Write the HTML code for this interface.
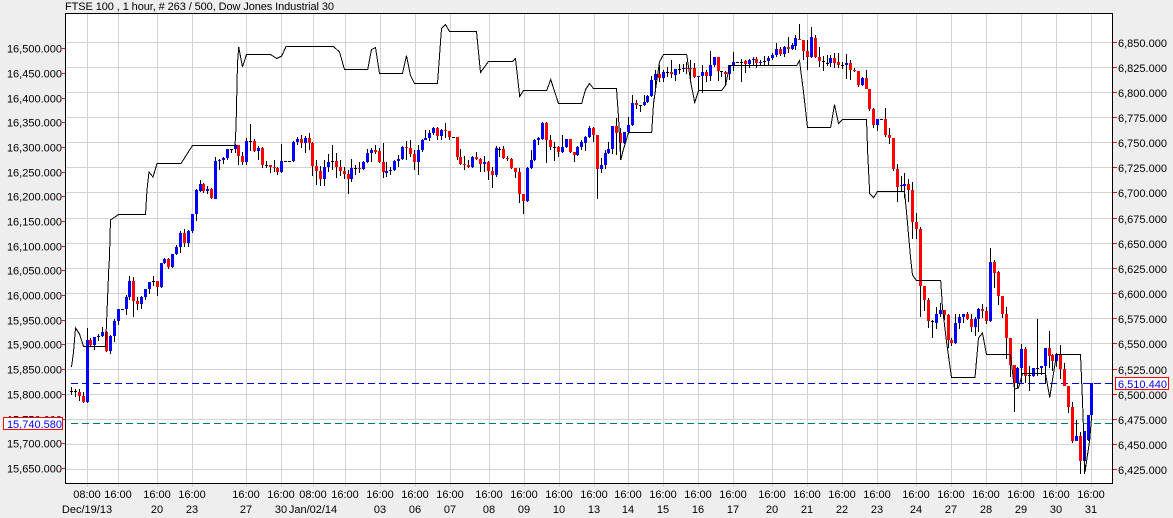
<!DOCTYPE html>
<html><head><meta charset="utf-8"><style>
html,body{margin:0;padding:0;background:#eeeeee}
svg{display:block}
text{font-family:"Liberation Sans",Arial,sans-serif;font-size:11px;fill:#000}
</style></head><body>
<svg xmlns="http://www.w3.org/2000/svg" width="1173" height="518" viewBox="0 0 1173 518">
<rect width="1173" height="518" fill="#eeeeee"/>
<rect x="65" y="13" width="1047" height="470" fill="#fff"/>
<g shape-rendering="crispEdges">
<path fill="none" stroke="#d3d3d3" d="M66 42.5H1112M66 67.5H1112M66 92.5H1112M66 117.5H1112M66 142.5H1112M66 167.5H1112M66 192.5H1112M66 218.5H1112M66 243.5H1112M66 268.5H1112M66 293.5H1112M66 318.5H1112M66 343.5H1112M66 369.5H1112M66 394.5H1112M66 419.5H1112M66 444.5H1112M66 469.5H1112"/>
<path fill="none" stroke="#d3d3d3" d="M87.5 14V487M118.5 14V487M157.5 14V487M192.5 14V487M246.5 14V487M281.5 14V487M313.5 14V487M345.5 14V487M380.5 14V487M415.5 14V487M450.5 14V487M489.5 14V487M524.5 14V487M559.5 14V487M594.5 14V487M628.5 14V487M663.5 14V487M698.5 14V487M733.5 14V487M772.5 14V487M807.5 14V487M842.5 14V487M877.5 14V487M916.5 14V487M951.5 14V487M986.5 14V487M1021.5 14V487M1056.5 14V487M1091.5 14V487"/>
<path fill="none" stroke="#0000e6" stroke-dasharray="7 4" d="M71 383.5H1112"/>
<path fill="none" stroke="#007a78" stroke-dasharray="7 4" d="M71 423.5H1112"/>
<g transform="translate(.5 0)" fill="none">
<path stroke="#000" d="M71 387V395M75 389V397M79 389V401M83 392V403M87 328V403M90 338V346M94 337V350M98 334V341M102 327V337M106 331V352M110 335V354M114 319V342M118 309V325M126 295V315M129 276V300M133 277V317M137 297V310M141 296V309M145 289V300M149 282V294M153 276V286M157 281V296M161 263V288M164 258V264M168 258V269M172 254V268M176 245V255M180 231V253M184 229V247M188 230V247M192 214V233M196 189V221M200 180V192M203 183V193M207 186V194M211 188V199M215 157V199M219 159V170M223 157V164M227 149V160M231 149V153M235 144V153M238 145V165M242 152V165M246 138V165M250 124V151M254 139V152M258 146V160M262 147V168M266 161V168M270 165V173M274 160V172M277 167V175M281 144V173M293 141V162M297 137V145M301 135V148M305 136V153M309 133V150M312 142V176M316 160V185M320 166V186M324 160V186M328 154V172M332 145V170M336 153V178M340 160V176M344 167V179M348 170V194M351 159V182M355 165V175M359 162V173M363 161V170M367 149V163M371 148V162M375 145V154M379 148V163M383 143V178M386 162V177M390 167V175M394 160V171M398 155V167M402 146V160M406 141V160M410 140V157M414 150V170M418 145V175M422 139V152M425 130V140M429 130V141M433 127V135M437 127V140M441 129V140M445 123V138M449 131V140M457 137V160M460 149V165M464 156V170M468 160V168M472 156V168M476 152V160M480 158V172M484 156V172M488 161V180M492 167V188M496 146V177M499 147V157M503 146V159M507 156V161M511 158V169M515 168V178M519 168V203M523 194V214M527 167V202M531 150V169M534 139V161M538 137V145M542 122V140M546 122V163M550 135V150M554 142V161M558 146V157M562 135V153M566 139V148M570 139V153M574 152V162M577 146V156M581 140V150M585 136V151M589 126V138M593 127V142M597 135V199M601 158V173M605 150V169M608 142V154M612 126V154M616 118V155M620 128V160M624 132V144M628 117V134M632 95V126M636 100V109M640 105V112M644 95V106M647 95V103M651 76V97M655 70V92M659 65V82M663 70V82M667 67V77M671 60V78M675 69V81M679 64V74M683 64V72M686 62V74M690 60V82M694 63V78M698 76V90M702 65V93M706 70V82M710 51V81M714 57V67M718 57V81M721 71V77M725 71V85M729 65V80M733 52V71M741 59V82M745 60V73M749 59V68M753 57V65M756 57V68M760 60V65M764 56V65M768 56V65M772 53V60M776 43V57M780 47V56M784 46V57M788 37V53M792 43V50M795 35V50M799 24V40M803 40V60M807 40V70M811 27V58M815 35V58M819 47V67M823 56V71M827 55V66M830 55V67M834 53V68M838 53V68M842 62V69M846 54V79M850 60V80M854 68V72M858 71V87M862 77V86M866 70V89M869 89V111M873 108V128M877 119V131M885 108V137M889 128V144M893 138V171M897 164V202M901 176V191M904 173V198M908 179V202M912 182V239M916 213V239M920 227V317M924 286V311M928 298V328M932 320V338M936 307V329M940 303V317M944 310V320M948 314V348M951 338V346M955 314V344M959 314V329M963 314V323M967 312V320M971 314V332M975 317V336M978 308V332M982 304V318M986 307V324M990 248V322M994 260V288M998 271V305M1002 296V318M1006 307V359M1010 338V377M1014 365V412M1017 367V388M1021 344V383M1025 347V383M1029 366V391M1033 368V377M1037 319V376M1041 366V375M1045 348V384M1049 331V368M1052 354V371M1056 353V367M1060 345V379M1064 363V386M1068 386V413M1072 402V443M1076 420V441M1080 432V474M1084 431V474M1088 415V441M1091 383V420"/>
<path stroke="#000" stroke-width="3" d="M71 391V392M75 391V392M122 309V310M153 281V282M231 149V150M250 141V142M266 165V166M285 161V162M289 161V162M332 161V162M355 168V169M453 137V138M499 149V150M554 147V148M640 105V106M667 72V73M679 69V70M721 71V72M737 62V63M741 62V63M764 61V62M823 61V62M827 63V64M842 65V66M881 119V120M932 321V322M1029 375V376M1037 368V369"/>
<path stroke="#0000ff" stroke-width="3" d="M87 340V402M94 337V345M98 336V337M102 332V336M110 336V351M114 321V336M118 309V321M126 297V309M129 281V297M141 297V304M145 289V297M149 282V289M161 263V287M164 259V263M172 254V267M176 247V254M180 233V247M188 231V243M192 214V231M196 190V214M200 184V191M207 189V191M215 161V199M219 160V161M223 158V160M227 149V158M235 145V149M246 141V162M258 148V151M281 161V172M293 142V161M297 139V142M305 138V143M324 167V179M328 162V167M351 168V179M363 162V169M367 153V162M371 150V153M386 171V173M390 170V171M394 161V170M398 159V161M402 147V159M418 150V162M422 140V150M425 138V140M429 133V138M433 128V133M441 130V136M472 157V167M484 162V164M496 148V175M527 168V201M531 160V168M534 140V160M538 138V140M542 123V139M562 147V152M566 139V147M577 147V155M581 142V147M585 137V143M589 128V137M601 165V169M605 153V165M608 149V153M612 126V149M624 132V143M628 125V132M632 103V125M644 102V105M647 96V102M651 80V96M655 74V80M663 72V78M675 69V75M683 68V69M698 76V77M702 72V76M710 65V76M714 57V65M729 65V74M733 62V65M749 60V64M753 59V60M760 62V63M768 58V61M772 55V58M776 49V55M784 47V54M792 45V49M795 38V46M811 37V57M830 58V63M846 63V65M862 78V85M877 119V125M901 185V186M904 184V186M936 314V323M940 310V314M955 323V343M959 317V323M963 314V317M975 319V327M978 309V319M990 262V321M1017 368V383M1021 349V368M1033 368V376M1041 366V368M1045 348V366M1056 354V361M1076 436V441M1084 431V461M1088 415V440M1091 383V415"/>
<path stroke="#ff0000" stroke-width="3" d="M79 392V396M83 396V402M90 340V345M106 332V351M133 281V301M137 301V304M157 281V287M168 259V267M184 233V243M203 184V191M211 189V198M238 145V156M242 156V162M254 141V151M262 148V165M270 165V167M274 167V168M277 168V172M301 139V143M309 138V143M312 143V166M316 166V171M320 171V179M336 161V167M340 167V171M344 171V174M348 174V179M359 168V169M375 150V152M379 151V162M383 162V172M406 147V148M410 148V154M414 154V162M437 128V136M445 130V131M449 131V137M457 137V157M460 157V164M464 164V165M468 165V167M476 157V159M480 159V164M488 162V171M492 171V175M503 149V158M507 158V159M511 159V168M515 168V172M519 172V194M523 194V201M546 123V140M550 140V147M558 147V152M570 139V152M574 152V155M593 128V135M597 135V169M616 126V133M620 133V143M636 103V105M659 74V78M671 72V74M686 68V69M690 68V69M694 68V77M706 72V76M718 57V71M725 72V74M745 61V64M756 59V63M780 49V54M788 47V49M799 39V40M803 40V51M807 51V57M815 38V57M819 57V61M834 58V63M838 62V65M850 63V70M854 70V71M858 71V85M866 78V89M869 89V109M873 109V125M885 119V135M889 135V138M893 138V169M897 169V187M908 184V190M912 190V222M916 222V229M920 229V286M924 286V300M928 300V321M944 310V315M948 315V340M951 340V343M967 314V319M971 319V327M982 309V311M986 311V321M994 262V273M998 272V296M1002 296V314M1006 314V338M1010 338V365M1014 365V383M1025 349V376M1049 348V356M1052 355V361M1060 354V369M1064 369V386M1068 386V407M1072 407V441M1080 436V461"/>
</g>
</g>
<polyline fill="none" stroke="#000" stroke-width="1" shape-rendering="crispEdges" points="71.5,367 73.5,352 75.5,328 79.5,334 83.5,346.5 105.5,346.5 107.5,300 108.7,270 109.5,257 110,237 110.5,220 118.5,214.5 145.5,214.5 147,190 149,172 153,177 157,163.5 181,163.5 192.5,145.5 235,145.5 236,128 237.5,63 238.7,47 242.5,67 246.5,54.5 270.5,54.5 276.7,58.5 281.7,56 286,46.5 333.5,46.5 339.5,52 344.5,69.5 367.7,69.5 371.5,49.5 375.5,47.5 379.5,73.5 402.5,73.5 406.5,55.5 410.5,75.5 414.5,83.5 437.5,83.5 441.5,28.5 445.5,24.5 449.5,31.5 476.5,31.5 480.5,72.5 488.5,61.5 512.5,61.5 515.5,58.7 519.7,96.5 523.5,90.5 546.7,90.5 550.7,79.5 558.5,103.5 581.7,103.5 585.5,89.5 589.5,83.5 593.5,88.5 616.5,88.5 618.5,117 620.7,160 622.7,152 628.5,132.5 651.7,132.5 653.5,103.5 659.5,62 663.5,54.5 686.7,54.5 690.7,82 694.7,102.5 698.7,90.5 721.7,90.5 725.7,85 729.5,65.5 796.7,65.5 799.5,60.7 803.5,92 807.5,127.5 830.7,127.5 834.5,104.5 838.5,123.5 842.5,119.5 866.5,119.5 867.7,153.5 869.7,193.5 873.7,197.5 877.5,191.5 904.5,191.5 906.5,212 910.5,257 912.5,275 916.5,280.5 940.7,280.5 942.5,308 946.5,341.5 951.5,377.5 975,377.5 978.5,338 982.5,333 986.5,354.5 1010.5,354.5 1014.5,389 1018.5,388 1022.5,373.5 1045.5,373.5 1049.7,397.5 1056.5,354.5 1080.5,354.5 1082.5,401 1085,472 1089.7,440 1091.5,418"/>
<g shape-rendering="crispEdges">
<rect x="65.5" y="13.5" width="1047" height="470" fill="none" stroke="#000"/>
<path fill="none" stroke="#ff0000" d="M62 48.5h3M62 73.5h3M62 98.5h3M62 122.5h3M62 147.5h3M62 172.5h3M62 196.5h3M62 221.5h3M62 246.5h3M62 270.5h3M62 295.5h3M62 320.5h3M62 344.5h3M62 369.5h3M62 394.5h3M62 419.5h3M62 443.5h3M62 468.5h3M1113 42.5h4M1113 67.5h4M1113 92.5h4M1113 117.5h4M1113 142.5h4M1113 167.5h4M1113 192.5h4M1113 218.5h4M1113 243.5h4M1113 268.5h4M1113 293.5h4M1113 318.5h4M1113 343.5h4M1113 369.5h4M1113 394.5h4M1113 419.5h4M1113 444.5h4M1113 469.5h4"/>
</g>
<text x="65" y="10" textLength="269" lengthAdjust="spacing">FTSE 100 , 1 hour, # 263 / 500, Dow Jones Industrial 30</text>
<g text-anchor="end">
<text x="62" y="52.5">16,500.000</text><text x="62" y="77.5">16,450.000</text><text x="62" y="102.5">16,400.000</text><text x="62" y="126.5">16,350.000</text><text x="62" y="151.5">16,300.000</text><text x="62" y="176.5">16,250.000</text><text x="62" y="200.5">16,200.000</text><text x="62" y="225.5">16,150.000</text><text x="62" y="250.5">16,100.000</text><text x="62" y="274.5">16,050.000</text><text x="62" y="299.5">16,000.000</text><text x="62" y="324.5">15,950.000</text><text x="62" y="348.5">15,900.000</text><text x="62" y="373.5">15,850.000</text><text x="62" y="398.5">15,800.000</text><text x="62" y="423.5">15,750.000</text><text x="62" y="447.5">15,700.000</text><text x="62" y="472.5">15,650.000</text>
</g>
<g>
<text x="1118" y="47">6,850.000</text><text x="1118" y="72">6,825.000</text><text x="1118" y="97">6,800.000</text><text x="1118" y="122">6,775.000</text><text x="1118" y="147">6,750.000</text><text x="1118" y="172">6,725.000</text><text x="1118" y="197">6,700.000</text><text x="1118" y="223">6,675.000</text><text x="1118" y="248">6,650.000</text><text x="1118" y="273">6,625.000</text><text x="1118" y="298">6,600.000</text><text x="1118" y="323">6,575.000</text><text x="1118" y="348">6,550.000</text><text x="1118" y="374">6,525.000</text><text x="1118" y="399">6,500.000</text><text x="1118" y="424">6,475.000</text><text x="1118" y="449">6,450.000</text><text x="1118" y="474">6,425.000</text>
</g>
<g shape-rendering="crispEdges">
<rect x="3.5" y="417.5" width="59" height="12" fill="#fff" stroke="#ff0000"/>
<rect x="1115.5" y="377.5" width="53" height="12" fill="#fff" stroke="#ff0000"/>
</g>
<text x="62" y="428" text-anchor="end" style="fill:#0000ff">15,740.580</text>
<text x="1118" y="388" style="fill:#0000ff">6,510.440</text>
<g text-anchor="middle">
<text x="87" y="498">08:00</text><text x="118" y="498">16:00</text><text x="157" y="498">16:00</text><text x="192" y="498">16:00</text><text x="246" y="498">16:00</text><text x="281" y="498">16:00</text><text x="313" y="498">08:00</text><text x="345" y="498">16:00</text><text x="380" y="498">16:00</text><text x="415" y="498">16:00</text><text x="450" y="498">16:00</text><text x="489" y="498">16:00</text><text x="524" y="498">16:00</text><text x="559" y="498">16:00</text><text x="594" y="498">16:00</text><text x="628" y="498">16:00</text><text x="663" y="498">16:00</text><text x="698" y="498">16:00</text><text x="733" y="498">16:00</text><text x="772" y="498">16:00</text><text x="807" y="498">16:00</text><text x="842" y="498">16:00</text><text x="877" y="498">16:00</text><text x="916" y="498">16:00</text><text x="951" y="498">16:00</text><text x="986" y="498">16:00</text><text x="1021" y="498">16:00</text><text x="1056" y="498">16:00</text><text x="1091" y="498">16:00</text>
<text x="87" y="513">Dec/19/13</text><text x="157" y="513">20</text><text x="192" y="513">23</text><text x="246" y="513">27</text><text x="281" y="513">30</text><text x="313" y="513">Jan/02/14</text><text x="380" y="513">03</text><text x="415" y="513">06</text><text x="450" y="513">07</text><text x="489" y="513">08</text><text x="524" y="513">09</text><text x="559" y="513">10</text><text x="594" y="513">13</text><text x="628" y="513">14</text><text x="663" y="513">15</text><text x="698" y="513">16</text><text x="733" y="513">17</text><text x="772" y="513">20</text><text x="807" y="513">21</text><text x="842" y="513">22</text><text x="877" y="513">23</text><text x="916" y="513">24</text><text x="951" y="513">27</text><text x="986" y="513">28</text><text x="1021" y="513">29</text><text x="1056" y="513">30</text><text x="1091" y="513">31</text>
</g>
</svg>
</body></html>
